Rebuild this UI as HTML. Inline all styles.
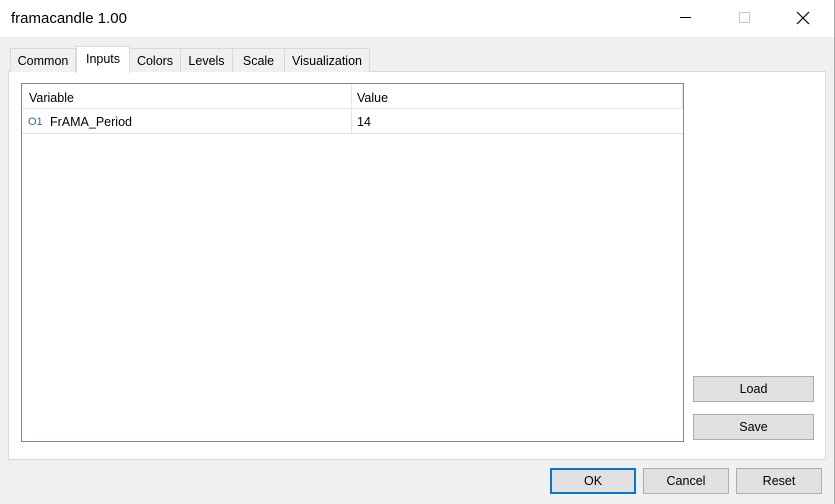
<!DOCTYPE html>
<html><head><style>
*{box-sizing:border-box;margin:0;padding:0}
body{width:835px;height:504px;background:#f0f0f0;font-family:"Liberation Sans",sans-serif;font-size:12px;color:#000;position:relative;overflow:hidden}
.a{position:absolute}
.title{left:0;top:0;width:835px;height:38px;background:#fff;border-bottom:1px solid #f0f0f0}
.tab{position:absolute;top:48px;height:24px;border:1px solid #d9d9d9;border-bottom:none;background:#f0f0f0;text-align:center;line-height:24px;font-size:12.5px}
.btn{position:absolute;background:#e1e1e1;border:1px solid #adadad;text-align:center;font-size:12.5px}
</style></head><body>
<div class="a title"></div>
<div class="a" style="left:11px;top:10px;font-size:15px">framacandle 1.00</div>
<div class="a" style="left:680px;top:17px;width:11px;height:1px;background:#000"></div>
<div class="a" style="left:739px;top:12px;width:11px;height:11px;border:1px solid #c8c8c8"></div>
<svg class="a" style="left:796px;top:11px" width="14" height="14"><path d="M1 1L13 13M13 1L1 13" stroke="#000" stroke-width="1.2"/></svg>
<div class="a" style="left:834px;top:0;width:1px;height:504px;background:#aaa"></div>
<div class="a" style="left:8px;top:71px;width:818px;height:389px;background:#fff;border:1px solid #d9d9d9"></div>
<div class="tab" style="left:10px;width:66px">Common</div>
<div class="tab" style="left:129px;width:52px">Colors</div>
<div class="tab" style="left:180px;width:53px">Levels</div>
<div class="tab" style="left:232px;width:53px">Scale</div>
<div class="tab" style="left:284px;width:86px">Visualization</div>
<div class="tab" style="left:76px;top:46px;height:27px;width:54px;background:#fff;line-height:24px">Inputs</div>
<div class="a" style="left:21px;top:83px;width:663px;height:359px;border:1px solid #828790;background:#fff"></div>
<div class="a" style="left:22px;top:108px;width:661px;height:1px;background:#e5e5e5"></div>
<div class="a" style="left:22px;top:133px;width:661px;height:1px;background:#e0e0e0"></div>
<div class="a" style="left:351px;top:84px;width:1px;height:49px;background:#e5e5e5"></div>
<div class="a" style="left:682px;top:84px;width:1px;height:24px;background:#e5e5e5"></div>
<div class="a" style="left:29px;top:91px;font-size:12.5px">Variable</div>
<div class="a" style="left:357px;top:91px;font-size:12.5px">Value</div>
<div class="a" style="left:28px;top:116px;font-size:11px;color:#2a6ca8">O1</div>
<div class="a" style="left:50px;top:115px;font-size:12.5px">FrAMA_Period</div>
<div class="a" style="left:357px;top:115px;font-size:12.5px">14</div>
<div class="btn" style="left:693px;top:376px;width:121px;height:26px;line-height:25px">Load</div>
<div class="btn" style="left:693px;top:414px;width:121px;height:26px;line-height:25px">Save</div>
<div class="btn" style="left:550px;top:468px;width:86px;height:26px;line-height:23px;border:2px solid #0078d7">OK</div>
<div class="btn" style="left:643px;top:468px;width:86px;height:26px;line-height:25px">Cancel</div>
<div class="btn" style="left:736px;top:468px;width:86px;height:26px;line-height:25px">Reset</div>
</body></html>
